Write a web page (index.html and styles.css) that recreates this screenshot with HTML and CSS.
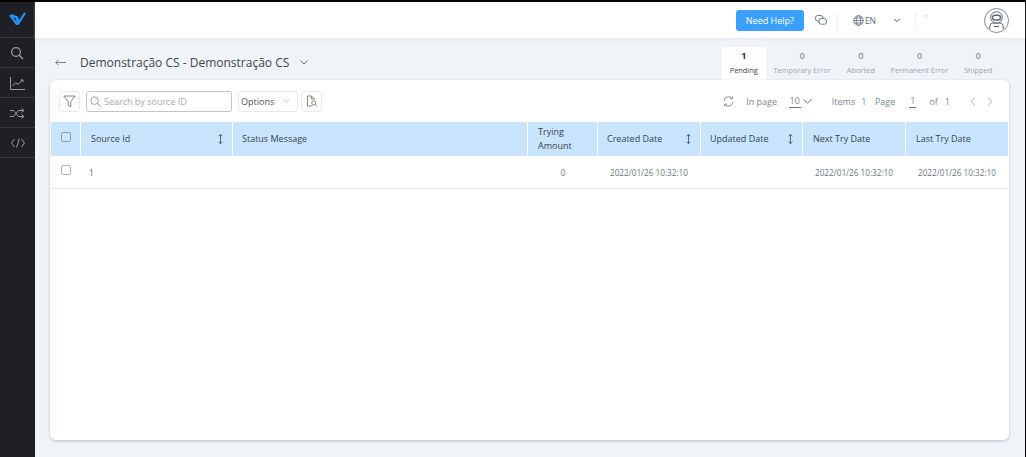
FILE: index.html
```html
<!DOCTYPE html>
<html lang="en">
<head>
<meta charset="utf-8">
<title>Demonstração CS</title>
<link rel="stylesheet" href="styles.css">
</head>
<body>
<div class="app">
  <nav class="sidebar">
    <div class="nav-item logo">
      <svg class="logo-mark" width="17" height="13" viewBox="0 0 17 13"><path fill="#2491f5" fill-rule="evenodd" d="M0 3.5L3 2.2 9 4.6 10 8 15 .5 17 1.5 9.5 13 7 13zM4 5.5L6.8 6.6 7.6 9.5z"/></svg>
    </div>
    <div class="nav-item">
      <svg class="nudge-left" width="14" height="14" viewBox="0 0 14 14" fill="none" stroke="#9a9da1" stroke-width="1.3"><circle cx="6" cy="6" r="4.4"/><path d="M9.2 9.2L13 13"/></svg>
    </div>
    <div class="nav-item">
      <svg class="nudge-down" width="15" height="13" viewBox="0 0 15 13" fill="none" stroke="#9a9da1" stroke-width="1"><path d="M.5 0v12.5H15"/><path d="M2.5 9l3-3.2 2.5 1.6 4.5-4.4M10.5 3h2.5v2"/></svg>
    </div>
    <div class="nav-item">
      <svg class="nudge-down" width="15" height="11" viewBox="0 0 15 11" fill="none" stroke="#9a9da1" stroke-width="1"><path d="M0 2.5h3.5l5 6H13M0 8.5h3.5l5-6H13"/><path d="M11.5 .5l2.5 2-2.5 2M11.5 6.5l2.5 2-2.5 2"/></svg>
    </div>
    <div class="nav-item">
      <svg width="14" height="10" viewBox="0 0 14 10" fill="none" stroke="#9a9da1" stroke-width="1"><path d="M3.4 1L.6 5l2.8 4M10.6 1l2.8 4-2.8 4M8.4 .5L5.6 9.5"/></svg>
    </div>
  </nav>
  <div class="main">
    <header class="topbar">
      <button class="help">Need Help?</button>
      <svg class="chat" width="12" height="11" viewBox="0 0 12 11" fill="none" stroke="#5f6b78" stroke-width=".9"><rect x=".5" y=".5" width="7.5" height="5.6" rx="2.2"/><rect x="4" y="3.6" width="7.5" height="5.6" rx="2.2" fill="#fff"/></svg>
      <span class="divider"></span>
      <span class="lang">
        <svg width="11" height="11" viewBox="0 0 11 11" fill="none" stroke="#5f6b78" stroke-width=".8"><circle cx="5.5" cy="5.5" r="4.8"/><ellipse cx="5.5" cy="5.5" rx="2.2" ry="4.8"/><path d="M.7 5.5h9.6M1.4 3h8.2M1.4 8h8.2"/></svg>
        EN
      </span>
      <svg class="lang-caret" width="8" height="5" viewBox="0 0 8 5" fill="none" stroke="#5f6b78"><path d="M1 1l3 2.6L7 1"/></svg>
      <span class="divider last"></span>
      <span class="user-name">'</span>
      <svg class="avatar" width="25" height="25" viewBox="0 0 25 25" fill="none" stroke="#5e6a76"><circle cx="12.5" cy="12.5" r="12" stroke-width=".8"/><circle cx="12.5" cy="9.5" r="5.8" stroke-width="1"/><rect x="8.6" y="7.2" width="7.8" height="4.8" rx="2.2" stroke-width="1.4"/><path d="M5.8 21v-2.4c0-2.4 2-3.6 3.6-3.6h6.2c1.6 0 3.6 1.2 3.6 3.6V21" stroke-width="1.1"/><path d="M10 18.5h5" stroke-width="1"/></svg>
    </header>
    <section class="content">
      <div class="title-row">
        <div class="title">
          <svg class="back" width="11" height="7" viewBox="0 0 11 7" fill="none" stroke="#66727e" stroke-width=".9"><path d="M11 3.5H.8M3.4 .8L.8 3.5l2.6 2.7"/></svg>
          <h1>Demonstração CS - Demonstração CS</h1>
          <svg width="8" height="5" viewBox="0 0 8 5" fill="none" stroke="#66727e"><path d="M.6.8L4 4 7.4.8"/></svg>
        </div>
        <ul class="tabs">
          <li class="tab active"><b>1</b><span>Pending</span></li>
          <li class="tab"><b>0</b><span>Temporary Error</span></li>
          <li class="tab"><b>0</b><span>Aborted</span></li>
          <li class="tab"><b>0</b><span>Permanent Error</span></li>
          <li class="tab"><b>0</b><span>Shipped</span></li>
        </ul>
      </div>
      <div class="card">
        <div class="toolbar">
          <div class="tools-left">
            <span class="icon-btn"><svg width="13" height="13" viewBox="0 0 13 13" fill="none" stroke="#85796f" stroke-width=".9"><path d="M.8 1h11.4L7.8 6.6v5.2l-2.6-1.4V6.6z"/></svg></span>
            <label class="search">
              <svg width="11" height="11" viewBox="0 0 11 11" fill="none" stroke="#8a96a3" stroke-width=".9"><circle cx="4.6" cy="4.6" r="3.8"/><path d="M7.4 7.4l3.2 3.2"/></svg>
              <span>Search by source ID</span>
            </label>
            <span class="options">Options
              <svg width="7" height="4" viewBox="0 0 7 4" fill="none" stroke="#b5bcc4" stroke-width=".9"><path d="M.5.5L3.5 3l3-2.5"/></svg>
            </span>
            <span class="icon-btn"><svg width="12" height="12" viewBox="0 0 12 12" fill="none" stroke="#7f7a76" stroke-width=".9"><path d="M6.5 11H1.5V1h4l2.5 2.5V5"/><path d="M5.5 1v3h2.5"/><circle cx="7.7" cy="8" r="2"/><path d="M9.2 9.5l1.6 1.6"/></svg></span>
          </div>
          <div class="pager">
            <svg class="refresh" width="11" height="11" viewBox="0 0 11 11" fill="none" stroke="#7b8794" stroke-width=".9"><path d="M1 5A4.5 4.5 0 0 1 9 2.4M10 6a4.5 4.5 0 0 1-8 2.6"/><path d="M9.4 .4v2.4H7M1.6 10.6V8.2H4"/></svg>
            <span class="pg-label inpage">In page</span>
            <span class="pg-num size">10</span>
            <svg class="size-caret" width="9" height="5" viewBox="0 0 9 5" fill="none" stroke="#66727e"><path d="M.6.6L4.5 4 8.4.6"/></svg>
            <span class="pg-label items">Items</span><span class="pg-value">1</span>
            <span class="pg-label page">Page</span>
            <span class="pg-num cur">1</span>
            <span class="pg-label of">of</span><span class="pg-value total">1</span>
            <svg class="nav-first" width="6" height="9" viewBox="0 0 6 9" fill="none" stroke="#aab2ba"><path d="M5 .6L1 4.5 5 8.4"/></svg>
            <svg class="nav-next" width="6" height="9" viewBox="0 0 6 9" fill="none" stroke="#aab2ba"><path d="M1 .6L5 4.5 1 8.4"/></svg>
          </div>
        </div>
        <div class="table">
          <div class="row head">
            <div class="cell check"><span class="box"></span></div>
            <div class="cell sort">Source Id <svg class="sort-icon" width="5" height="10" viewBox="0 0 5 10" fill="none" stroke="#4a5560" stroke-width=".9"><path d="M2.5 .5v9M.6 2l1.9-1.5L4.4 2M.6 8l1.9 1.5L4.4 8"/></svg></div>
            <div class="cell tight">Status Message</div>
            <div class="cell">Trying Amount</div>
            <div class="cell sort tight">Created Date <svg class="sort-icon" width="5" height="10" viewBox="0 0 5 10" fill="none" stroke="#4a5560" stroke-width=".9"><path d="M2.5 .5v9M.6 2l1.9-1.5L4.4 2M.6 8l1.9 1.5L4.4 8"/></svg></div>
            <div class="cell sort tight">Updated Date <svg class="sort-icon" width="5" height="10" viewBox="0 0 5 10" fill="none" stroke="#4a5560" stroke-width=".9"><path d="M2.5 .5v9M.6 2l1.9-1.5L4.4 2M.6 8l1.9 1.5L4.4 8"/></svg></div>
            <div class="cell">Next Try Date</div>
            <div class="cell">Last Try Date</div>
          </div>
          <div class="row body">
            <div class="cell check"><span class="box"></span></div>
            <div class="cell id">1</div>
            <div class="cell"></div>
            <div class="cell num">0</div>
            <div class="cell date">2022/01/26 10:32:10</div>
            <div class="cell"></div>
            <div class="cell date">2022/01/26 10:32:10</div>
            <div class="cell date">2022/01/26 10:32:10</div>
          </div>
        </div>
      </div>
    </section>
  </div>
</div>
</body>
</html>
```
FILE: styles.css
```css
* { box-sizing: border-box; }
html, body { margin: 0; height: 100%; }
body { font-family: "Open Sans", "Noto Sans", sans-serif; color: #47525e; background: #fff; overflow: hidden; }
svg { display: block; flex: none; }

.app { display: flex; width: 1026px; height: 457px; border-top: 2px solid #000; border-right: 1px solid #000; }

.sidebar { width: 35px; flex: none; background: #1e2025; }
.nav-item { height: 30px; display: flex; align-items: center; justify-content: center; border-bottom: 1px solid #34373b; }
.logo { height: 36px; }
.logo-mark { margin-bottom: 2px; }
.nudge-left { margin-right: 1px; }
.nudge-down { margin-top: 1px; }

.main { flex: 1; min-width: 0; display: flex; flex-direction: column; background: #f0f3f8; }

.topbar { height: 36px; flex: none; background: #fff; display: flex; align-items: center; padding: 1px 16px 0 0; justify-content: flex-end; box-shadow: 0 1px 2px rgba(210,216,226,.5); }
.help { width: 68px; height: 21px; padding: 0; border: 0; border-radius: 3px; background: #3ba0fc; color: #fff; font: 500 9px "Open Sans", sans-serif; }
.chat { margin-left: 11px; }
.divider { width: 1px; height: 16px; background: #eceef1; margin-left: 10px; }
.lang { display: flex; align-items: center; gap: 1px; margin-left: 15px; font-size: 8.5px; color: #5f6b78; }
.lang-caret { margin-left: 17px; }
.divider.last { margin-left: 14px; }
.user-name { width: 59px; margin-left: 9px; margin-bottom: 4px; font-size: 9px; color: #9aa3ad; }

.content { flex: 1; min-height: 0; padding: 0 16px 17px 15px; display: flex; flex-direction: column; }
.title-row { height: 42px; flex: none; display: flex; justify-content: space-between; align-items: flex-end; }
.title { display: flex; align-items: center; padding: 0 0 9px 5px; }
.title h1 { margin: 0 11px 0 14px; font-size: 12px; font-weight: 400; color: #3d4751; white-space: nowrap; }
.tabs { display: flex; list-style: none; margin: 0 1.5px 0 0; padding: 0; }
.tab { display: flex; flex-direction: column; align-items: center; width: 58.7px; height: 33px; padding-top: 3px; color: #a0a7ae; font-size: 7.4px; }
.tab b { font-size: 9px; font-weight: 600; color: #8a9199; line-height: 12px; margin-bottom: 3px; }
.tab span { white-space: nowrap; line-height: 11px; }
.tab.active { width: 44px; margin-right: 7px; background: #fff; border-radius: 4px 4px 0 0; color: #36404a; }
.tab.active b { color: #2c343c; font-weight: 700; }

.card { flex: 1; min-height: 0; background: #fff; border-radius: 6px; box-shadow: 0 1px 3px rgba(170,178,195,.8); padding: 0 1px; }
.toolbar { height: 42px; display: flex; justify-content: space-between; align-items: center; padding: 0 15px 0 8px; }
.tools-left { display: flex; align-items: center; }
.icon-btn { width: 21px; height: 21px; display: flex; align-items: center; justify-content: center; border: 1px solid #e6e9ee; border-radius: 3px; }
.search { width: 146px; height: 21px; margin-left: 6px; display: flex; align-items: center; gap: 3px; padding-left: 3px; border: 1px solid #bcc5d0; border-radius: 3px; font-size: 9px; color: #a3abb4; }
.options { width: 60px; height: 21px; margin: 0 3px 0 6px; display: flex; align-items: center; justify-content: space-between; padding: 0 7px 0 2px; border: 1px solid #e6e9ee; border-radius: 3px; font-size: 9px; color: #47525e; }

.pager { display: flex; align-items: center; font-size: 9px; color: #7b8794; }
.inpage { margin-left: 12px; }
.pg-num { border-bottom: 1px solid #66727e; line-height: 12px; padding: 0 1px; margin-top: 1px; }
.size { margin-left: 11.5px; }
.size-caret { margin-left: 2px; }
.items { margin-left: 20px; }
.pg-value { margin-left: 6px; }
.page { margin-left: 8.5px; }
.cur { margin-left: 14px; }
.of { margin-left: 13px; }
.total { margin-left: 7px; }
.nav-first { margin-left: 20px; }
.nav-next { margin-left: 11px; }

.row { display: grid; grid-template-columns: 30px 152px 295px 70px 103px 102px 103px 102px; }
.head { height: 34px; }
.head .cell { background: #c9e5fd; margin-right: 1px; display: flex; align-items: center; padding: 0 10px; font-size: 9px; color: #38434e; line-height: 14px; }
.head .cell:last-child { margin-right: 0; }
.head .tight { padding-left: 9px; }
.head .sort { justify-content: space-between; padding-right: 9px; }
.head .check { justify-content: center; padding: 0 0 4px; }
.box { display: block; width: 10px; height: 10px; border: 1px solid #aeb5bd; border-radius: 2px; background: #fff; }
.head .box { background: #cfe5f8; border-color: #8d9aa8; }

.body { height: 33px; border-bottom: 1px solid #e7eaee; }
.body .cell { display: flex; align-items: center; font-size: 8.2px; color: #6d7680; white-space: nowrap; padding-left: 12px; }
.body .check { justify-content: center; padding: 0 0 4px; }
.body .id { padding-left: 8px; color: #3f5a75; }
.body .num { justify-content: center; padding-left: 0; padding-right: 0; }
```
